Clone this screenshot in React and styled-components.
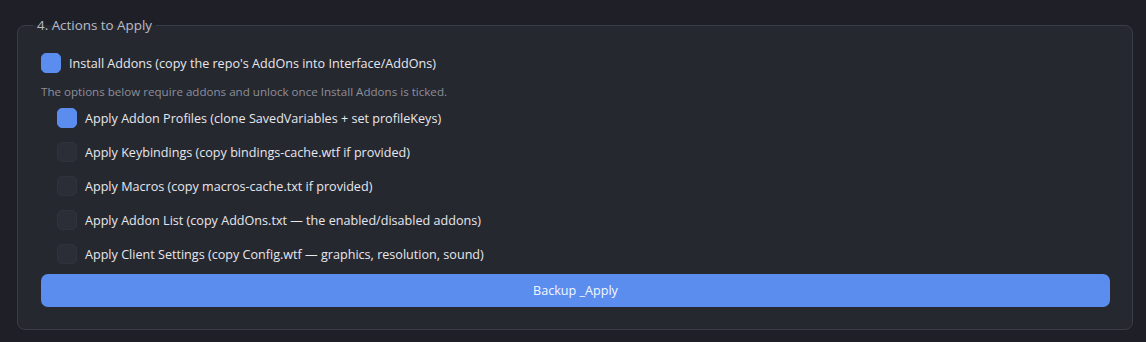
import React from 'react'
import styled, { createGlobalStyle } from 'styled-components'

const GlobalStyle = createGlobalStyle`
  html, body {
    margin: 0;
    background: #1e1f27;
  }
  body {
    font-family: "Open Sans", "Noto Sans", sans-serif;
    color: #e2e4ea;
  }
`

const Page = styled.div`
  padding: 16px 13px 0 17px;
  width: 1146px;
  height: 342px;
  box-sizing: border-box;
`

const Group = styled.fieldset`
  margin: 0;
  padding: 19px 22px 22px 23px;
  border: 1px solid #3a3c46;
  border-radius: 8px;
  background: #262830;
  display: flex;
  flex-direction: column;
`

const Legend = styled.legend`
  padding: 0 4px;
  margin-left: -8px;
  font-size: 13.4px;
  line-height: 18px;
  color: #b9bcc6;
`

const Row = styled.label`
  display: flex;
  align-items: center;
  gap: 8px;
  height: 20px;
  margin-left: ${p => (p.$nested ? '16px' : '0')};
  margin-bottom: 14px;
  font-size: 12.6px;
  color: #e6e7ec;
`

const Box = styled.span`
  width: 20px;
  height: 20px;
  flex: none;
  box-sizing: border-box;
  border-radius: 5px;
  background: ${p => (p.$checked ? '#5b8def' : '#2c2e37')};
  border: 1px solid ${p => (p.$checked ? '#5b8def' : '#31333c')};
`

const Hint = styled.p`
  margin: -3px 0 9px;
  font-size: 11.6px;
  line-height: 15px;
  color: #8c8f99;
`

const ApplyButton = styled.button`
  margin-top: -4px;
  height: 33px;
  border: none;
  border-radius: 7px;
  background: #5b8def;
  color: #f4f7ff;
  font-family: inherit;
  font-size: 12.6px;
`

const options = [
  { label: 'Apply Addon Profiles (clone SavedVariables + set profileKeys)', checked: true },
  { label: 'Apply Keybindings (copy bindings-cache.wtf if provided)' },
  { label: 'Apply Macros (copy macros-cache.txt if provided)' },
  { label: 'Apply Addon List (copy AddOns.txt — the enabled/disabled addons)' },
  { label: 'Apply Client Settings (copy Config.wtf — graphics, resolution, sound)' },
]

export default function App() {
  return (
    <Page>
      <GlobalStyle />
      <Group>
        <Legend>4. Actions to Apply</Legend>
        <Row>
          <Box $checked />
          Install Addons (copy the repo's AddOns into Interface/AddOns)
        </Row>
        <Hint>The options below require addons and unlock once Install Addons is ticked.</Hint>
        {options.map(o => (
          <Row key={o.label} $nested>
            <Box $checked={o.checked} />
            {o.label}
          </Row>
        ))}
        <ApplyButton>Backup _Apply</ApplyButton>
      </Group>
    </Page>
  )
}
